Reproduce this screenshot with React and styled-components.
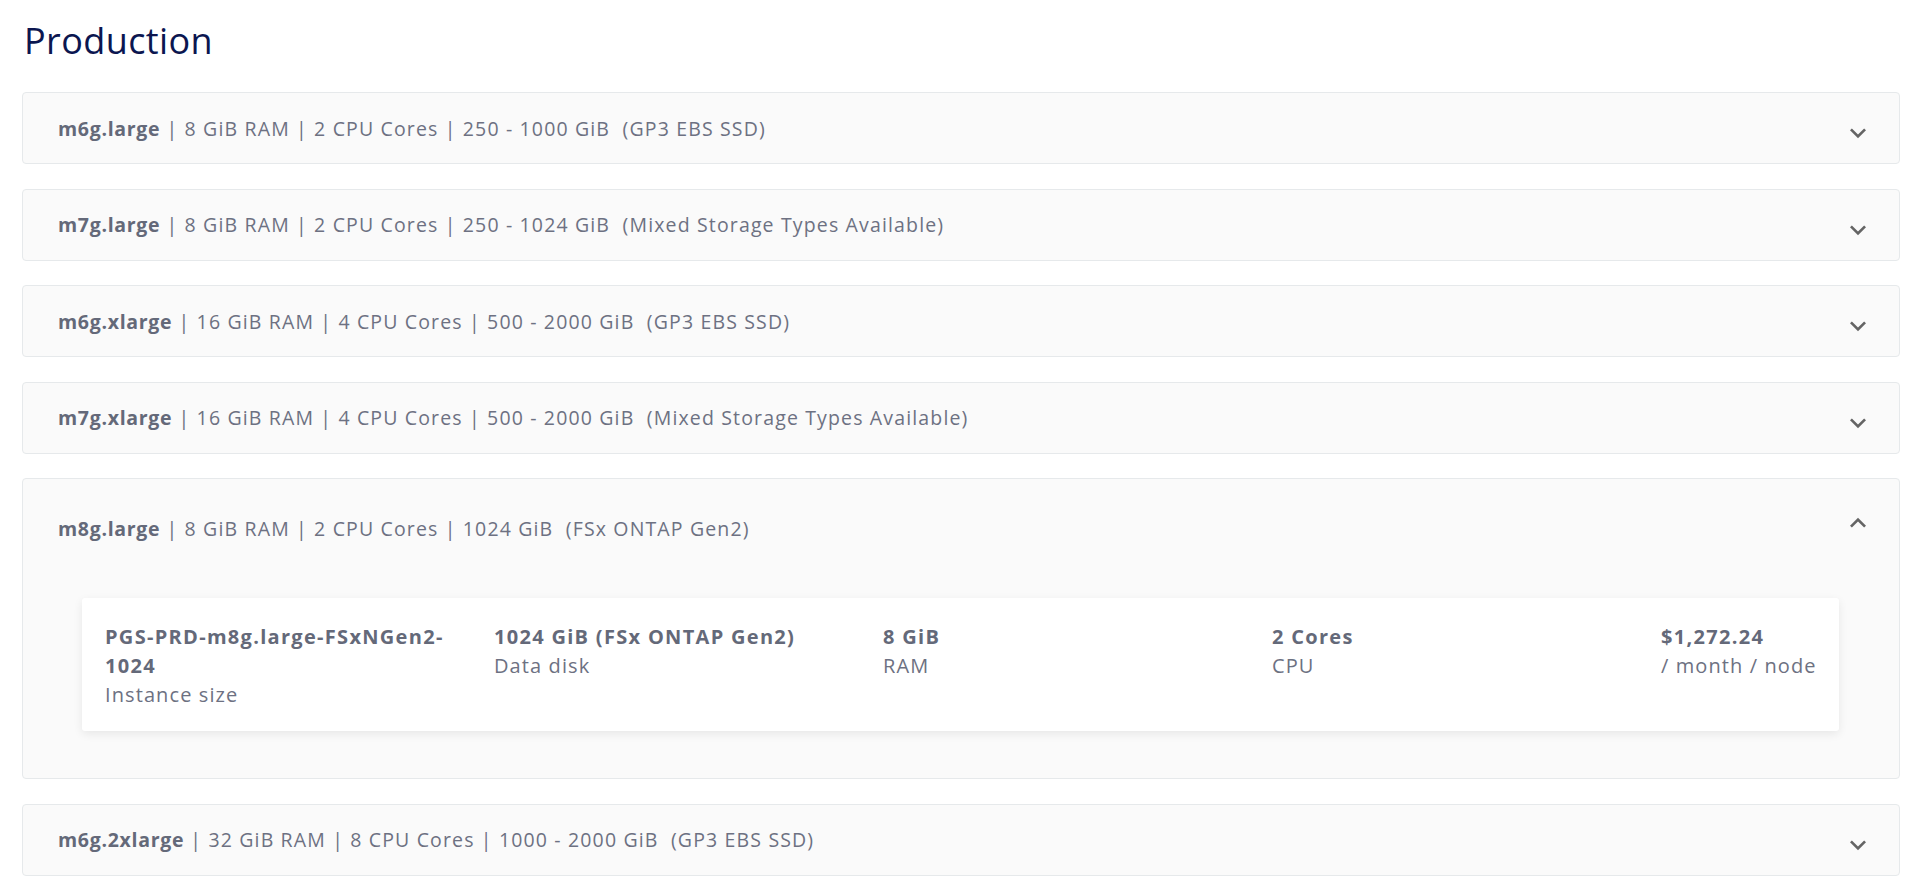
import React, { useState } from "react";
import styled, { createGlobalStyle } from "styled-components";

const GlobalStyle = createGlobalStyle`
	body {
		margin: 0;
		background: #ffffff;
		font-family: "Open Sans", "Liberation Sans", sans-serif;
	}
`;

const Page = styled.div`
	padding: 18px 20px 24px 22px;
`;

const Title = styled.h2`
	margin: 0 0 28px 2px;
	font-size: 36px;
	line-height: 46px;
	font-weight: 500;
	letter-spacing: 0.4px;
	color: #0b1650;
`;

const List = styled.div`
	display: flex;
	flex-direction: column;
	gap: 24.5px;
`;

const Panel = styled.div`
	background: #fafafa;
	border: 1px solid #e6e9eb;
	border-radius: 4px;
`;

const Summary = styled.div`
	display: flex;
	align-items: center;
	justify-content: space-between;
	height: ${(p) => (p.open ? "98px" : "70px")};
	padding: 0 25px 0 35px;
	cursor: pointer;
`;

const SummaryText = styled.div`
	font-size: 19.5px;
	color: #6d7182;
	white-space: pre;
	letter-spacing: 1.15px;

	b {
		font-weight: 700;
		color: #646979;
		letter-spacing: 0.7px;
	}
`;

const Chevron = styled.svg`
	width: 32px;
	height: 32px;
	fill: rgba(0, 0, 0, 0.6);
	transform: ${(p) => (p.open ? "rotate(180deg)" : "none")};
	margin-top: ${(p) => (p.open ? "-10px" : "10px")};
`;

const Details = styled.div`
	padding: 21px 60px 47px 59px;
`;

const Card = styled.div`
	display: grid;
	grid-template-columns: repeat(4, 389px) auto;
	padding: 24px 23px 22px;
	background: #ffffff;
	border-radius: 3px;
	box-shadow: 0 3px 10px rgba(0, 0, 0, 0.08);
`;

const Cell = styled.div`
	padding-right: 24px;
	font-size: 20px;
	line-height: 29px;
	letter-spacing: 1.1px;
	color: #6d7182;

	&:last-child {
		padding-right: 0;
		white-space: nowrap;
	}
`;

const Value = styled.div`
	font-weight: 700;
	letter-spacing: 1.3px;
	color: #646979;
`;

const Label = styled.div``;

const plans = [
	{ name: "m6g.large", spec: "8 GiB RAM | 2 CPU Cores | 250 - 1000 GiB  (GP3 EBS SSD)" },
	{ name: "m7g.large", spec: "8 GiB RAM | 2 CPU Cores | 250 - 1024 GiB  (Mixed Storage Types Available)" },
	{ name: "m6g.xlarge", spec: "16 GiB RAM | 4 CPU Cores | 500 - 2000 GiB  (GP3 EBS SSD)" },
	{ name: "m7g.xlarge", spec: "16 GiB RAM | 4 CPU Cores | 500 - 2000 GiB  (Mixed Storage Types Available)" },
	{
		name: "m8g.large",
		spec: "8 GiB RAM | 2 CPU Cores | 1024 GiB  (FSx ONTAP Gen2)",
		details: [
			{ value: "PGS-PRD-m8g.large-FSxNGen2-1024", label: "Instance size" },
			{ value: "1024 GiB (FSx ONTAP Gen2)", label: "Data disk" },
			{ value: "8 GiB", label: "RAM" },
			{ value: "2 Cores", label: "CPU" },
			{ value: "$1,272.24", label: "/ month / node" }
		]
	},
	{ name: "m6g.2xlarge", spec: "32 GiB RAM | 8 CPU Cores | 1000 - 2000 GiB  (GP3 EBS SSD)" }
];

const ExpandIcon = ({ open }) => (
	<Chevron open={open} viewBox="0 0 24 24">
		<path d="M16.59 8.59 12 13.17 7.41 8.59 6 10l6 6 6-6z" />
	</Chevron>
);

const PlanRow = ({ plan, open, onToggle }) => (
	<Panel>
		<Summary open={open} onClick={onToggle}>
			<SummaryText>
				<b>{plan.name}</b> | {plan.spec}
			</SummaryText>
			<ExpandIcon open={open} />
		</Summary>
		{open && plan.details && (
			<Details>
				<Card>
					{plan.details.map((d) => (
						<Cell key={d.label}>
							<Value>{d.value}</Value>
							<Label>{d.label}</Label>
						</Cell>
					))}
				</Card>
			</Details>
		)}
	</Panel>
);

const App = () => {
	const [openPlan, setOpenPlan] = useState("m8g.large");

	return (
		<>
			<GlobalStyle />
			<Page>
				<Title>Production</Title>
				<List>
					{plans.map((plan) => (
						<PlanRow
							key={plan.name}
							plan={plan}
							open={openPlan === plan.name}
							onToggle={() => setOpenPlan(openPlan === plan.name ? null : plan.name)}
						/>
					))}
				</List>
			</Page>
		</>
	);
};

export default App;
